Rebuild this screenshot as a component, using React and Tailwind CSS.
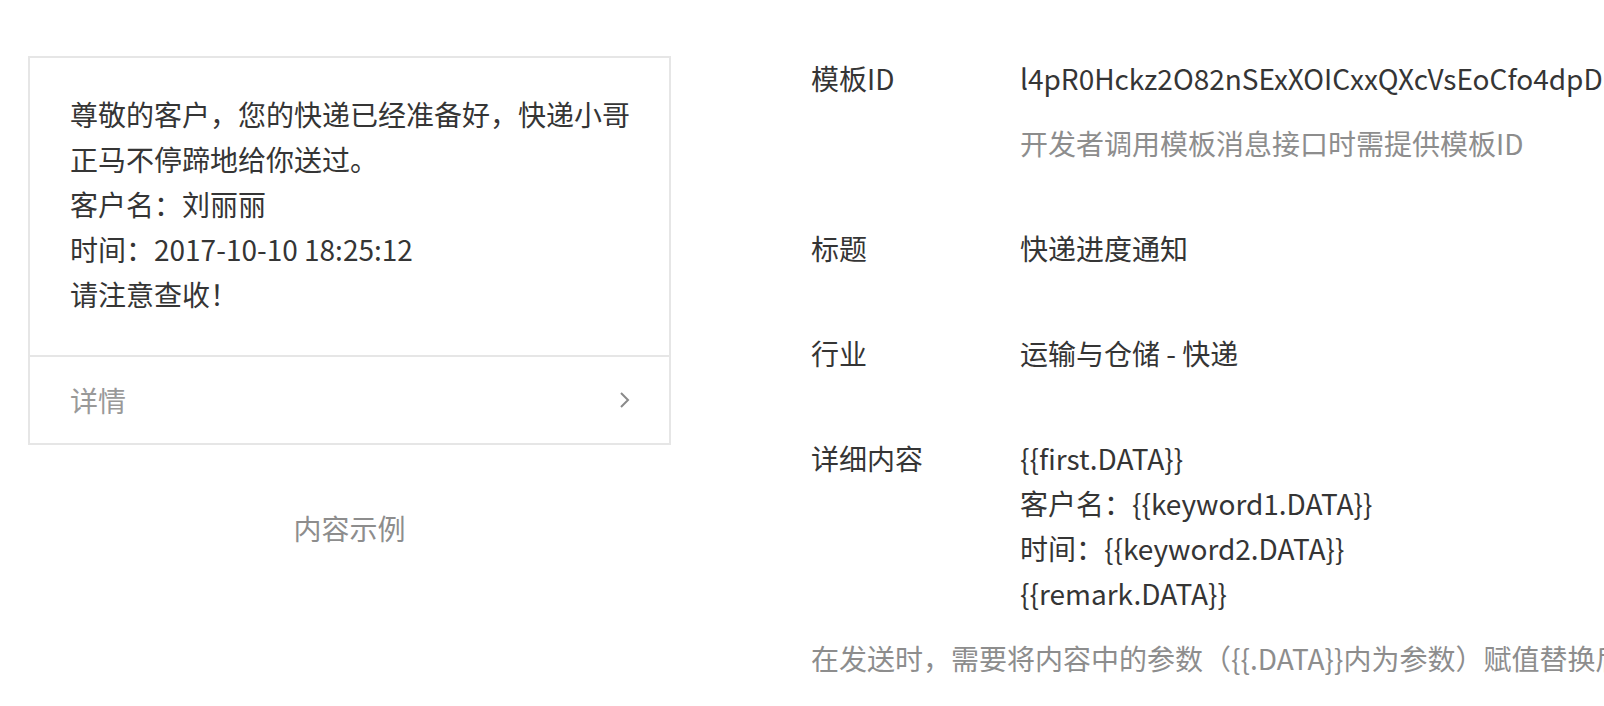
import React from 'react';

const rows = [
  { label: '标题', value: ['快递进度通知'] },
  { label: '行业', value: ['运输与仓储 - 快递'] },
  { label: '详细内容', value: ['{{first.DATA}}', '客户名：{{keyword1.DATA}}', '时间：{{keyword2.DATA}}', '{{remark.DATA}}'] },
];

export default function App() {
  return (
    <div
      className="flex min-h-[706px] w-[1604px] overflow-hidden bg-white pl-[28px] pt-[56px] text-[28px] leading-[45px] text-[#353535]"
      style={{ fontFamily: '"Noto Sans CJK SC", "Noto Sans", sans-serif' }}
    >
      {/* 左侧：内容示例卡片 */}
      <div className="w-[643px] shrink-0">
        <div className="border-2 border-[#e6e6e6]">
          <div className="pl-[40px] pr-[36px] pt-[34px] pb-[38px]">
            <p>尊敬的客户，您的快递已经准备好，快递小哥正马不停蹄地给你送过。</p>
            <p>客户名：刘丽丽</p>
            <p>时间：2017-10-10 18:25:12</p>
            <p>请注意查收！</p>
          </div>
          <div className="flex h-[88px] items-center justify-between border-t-2 border-[#e6e6e6] pl-[40px] pr-[38px]">
            <span className="text-[#999999]">详情</span>
            <svg width="12" height="18" viewBox="0 0 12 18" fill="none">
              <path d="M2 2l7 7-7 7" stroke="#8a8a8a" strokeWidth="2" />
            </svg>
          </div>
        </div>
        <p className="mt-[61px] text-center text-[#8d8d8d]">内容示例</p>
      </div>

      {/* 右侧：模板信息 */}
      <div className="ml-[140px] min-w-0 flex-1">
        <div className="flex">
          <div className="w-[209px] shrink-0">模板ID</div>
          <div className="min-w-0">
            <p className="whitespace-nowrap">l4pR0Hckz2O82nSExXOICxxQXcVsEoCfo4dpDSuTGME</p>
            <p className="mt-[20px] text-[#8d8d8d]">开发者调用模板消息接口时需提供模板ID</p>
          </div>
        </div>
        {rows.map((row) => (
          <div key={row.label} className="mt-[60px] flex">
            <div className="w-[209px] shrink-0">{row.label}</div>
            <div>
              {row.value.map((v) => (
                <p key={v} className="whitespace-nowrap">{v}</p>
              ))}
            </div>
          </div>
        ))}
        <p className="mt-[20px] whitespace-nowrap text-[#8d8d8d]">
          在发送时，需要将内容中的参数（{'{{.DATA}}'}内为参数）赋值替换后才可发送
        </p>
      </div>
    </div>
  );
}
